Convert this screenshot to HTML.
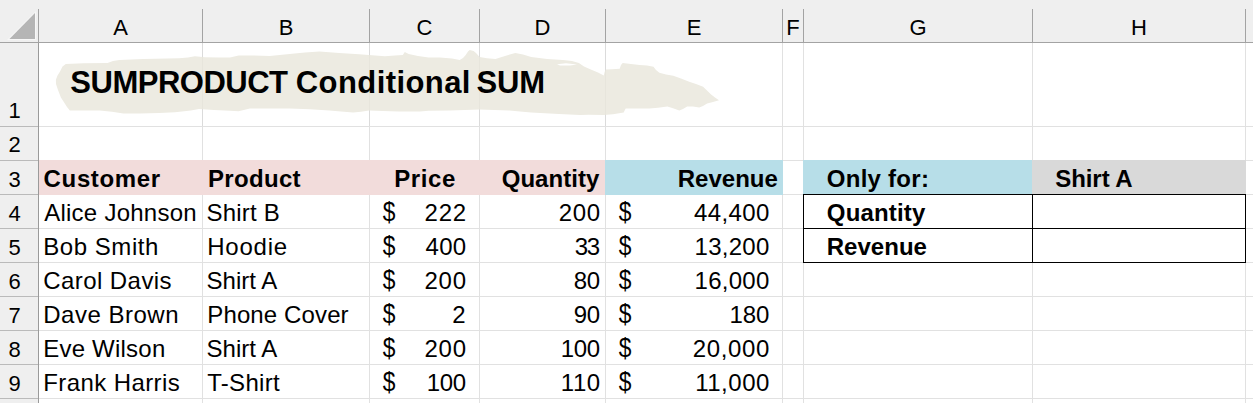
<!DOCTYPE html>
<html><head><meta charset="utf-8"><title>sheet</title>
<style>
html,body{margin:0;padding:0;}
body{width:1253px;height:403px;overflow:hidden;background:#fff;position:relative;font-family:"Liberation Sans",sans-serif;color:#000;}
.a{position:absolute;}
.t{position:absolute;white-space:nowrap;line-height:1;}
.vl{position:absolute;width:1px;background:#e1e1e1;top:43px;height:360px;}
.hl{position:absolute;height:1px;background:#e1e1e1;left:39px;width:1214px;}
.hv{position:absolute;width:1px;background:#a3a3a3;top:9px;height:33px;}
.rl{position:absolute;height:1px;background:#bababa;left:0;width:38px;}
</style></head><body>

<div class="a" style="left:0;top:0;width:1253px;height:42px;background:#efefef;"></div>
<div class="a" style="left:0;top:0;width:38px;height:403px;background:#efefef;"></div>
<div class="hl" style="top:126px;"></div>
<div class="hl" style="top:160px;"></div>
<div class="hl" style="top:194px;"></div>
<div class="hl" style="top:228px;"></div>
<div class="hl" style="top:262px;"></div>
<div class="hl" style="top:296px;"></div>
<div class="hl" style="top:330px;"></div>
<div class="hl" style="top:364px;"></div>
<div class="hl" style="top:398px;"></div>
<div class="vl" style="left:202px;"></div>
<div class="vl" style="left:369px;"></div>
<div class="vl" style="left:479px;"></div>
<div class="vl" style="left:605px;"></div>
<div class="vl" style="left:782px;"></div>
<div class="vl" style="left:803px;"></div>
<div class="vl" style="left:1032px;"></div>
<div class="vl" style="left:1245px;"></div>
<div class="a" style="left:39px;top:160px;width:566px;height:35px;background:#f2dcdb;"></div>
<div class="a" style="left:605px;top:160px;width:178px;height:35px;background:#b7dee8;"></div>
<div class="a" style="left:803px;top:160px;width:229px;height:35px;background:#b7dee8;"></div>
<div class="a" style="left:1032px;top:160px;width:214px;height:35px;background:#d9d9d9;"></div>
<div class="a" style="left:0;top:42px;width:1253px;height:1px;background:#a3a3a3;"></div>
<div class="a" style="left:38px;top:43px;width:1px;height:360px;background:#9a9a9a;"></div>
<div class="hv" style="left:38px;"></div>
<div class="hv" style="left:202px;"></div>
<div class="hv" style="left:369px;"></div>
<div class="hv" style="left:479px;"></div>
<div class="hv" style="left:605px;"></div>
<div class="hv" style="left:782px;"></div>
<div class="hv" style="left:803px;"></div>
<div class="hv" style="left:1032px;"></div>
<div class="hv" style="left:1245px;"></div>
<div class="rl" style="top:126px;"></div>
<div class="rl" style="top:160px;"></div>
<div class="rl" style="top:194px;"></div>
<div class="rl" style="top:228px;"></div>
<div class="rl" style="top:262px;"></div>
<div class="rl" style="top:296px;"></div>
<div class="rl" style="top:330px;"></div>
<div class="rl" style="top:364px;"></div>
<div class="rl" style="top:398px;"></div>
<svg class="a" style="left:0;top:0" width="39" height="43"><polygon points="36,11 36,40 7,40" fill="#f7f7f7"/><polygon points="35,13 35,39 9.4,39" fill="#b5b5b5"/></svg>
<svg class="a" style="left:0;top:0" width="1253" height="403"><path fill="#edebe2" d="M59.9,71.8 L62.5,66.5 L65.8,63.9 L83.7,63.3 L107.5,62.9 L113.0,61.0 L119.4,59.9 L143.3,58.9 L179.0,58.3 L188.0,57.6 L194.9,56.3 L205.0,57.2 L218.7,57.5 L230.0,57.6 L238.6,55.5 L249.9,55.5 L269.7,55.9 L289.6,53.9 L305.0,52.5 L319.4,51.5 L339.2,52.9 L359.1,54.3 L384.9,56.3 L395.0,55.6 L402.8,54.9 L404.8,51.9 L408.7,53.9 L418.0,56.0 L428.6,57.5 L439.9,57.5 L452.0,58.5 L459.7,59.9 L463.0,58.0 L465.7,54.9 L468.0,51.5 L469.7,50.0 L473.6,51.0 L476.0,53.0 L479.6,56.9 L487.0,58.2 L495.5,58.9 L505.0,56.0 L515.3,52.9 L523.0,54.5 L531.2,56.9 L547.1,58.9 L563.0,59.9 L572.0,61.0 L578.9,62.9 L584.0,66.5 L590.8,69.5 L598.0,72.5 L603.8,75.4 L604.6,72.0 L605.8,69.4 L612.0,69.3 L619.7,68.8 L621.0,65.0 L622.7,62.9 L631.0,64.0 L639.6,64.9 L647.0,65.6 L653.5,66.8 L656.0,70.0 L659.4,72.8 L666.0,74.5 L673.3,75.8 L681.0,78.5 L689.2,81.7 L696.0,84.0 L703.1,86.7 L707.0,90.5 L711.1,94.6 L715.0,97.5 L719.0,100.2 L713.0,102.0 L707.1,103.6 L703.0,106.0 L699.2,107.6 L693.0,106.6 L687.2,106.6 L683.0,109.0 L679.3,110.5 L673.0,108.2 L667.4,106.6 L658.0,107.8 L649.5,108.5 L637.0,108.6 L625.7,108.5 L624.5,110.8 L623.7,112.5 L613.0,114.2 L603.8,115.1 L588.8,114.8 L580.0,115.0 L559.0,113.9 L545.0,113.2 L531.2,112.5 L520.0,111.4 L509.4,110.5 L479.6,109.5 L449.8,110.5 L428.6,110.7 L420.0,111.5 L398.8,111.5 L383.0,111.0 L369.0,110.5 L361.0,111.8 L353.1,112.5 L341.0,111.4 L329.3,110.5 L310.0,109.3 L289.6,108.5 L249.9,108.5 L238.6,111.2 L230.0,110.7 L214.0,110.0 L198.9,109.1 L190.9,110.5 L175.0,112.2 L159.2,113.1 L140.0,113.6 L123.4,113.5 L112.0,111.8 L99.6,110.5 L85.0,110.6 L69.8,110.5 L67.0,107.0 L64.8,103.6 L60.9,97.6 L57.9,89.7 L56.0,84.0 L55.9,79.7 L57.5,75.5 Z"/><path fill="#fff" d="M557,64.2 L566,63.3 L577,64.6 L570,65.6 L560,65.4 Z"/></svg>
<div class="a" style="left:202px;top:43px;width:1px;height:83px;background:rgba(0,0,0,0.022);"></div>
<div class="a" style="left:369px;top:43px;width:1px;height:83px;background:rgba(0,0,0,0.022);"></div>
<div class="a" style="left:479px;top:43px;width:1px;height:83px;background:rgba(0,0,0,0.022);"></div>
<div class="a" style="left:605px;top:43px;width:1px;height:83px;background:rgba(0,0,0,0.022);"></div>
<div class="a" style="left:803px;top:194px;width:443px;height:1px;background:#000;"></div>
<div class="a" style="left:803px;top:228px;width:443px;height:1px;background:#000;"></div>
<div class="a" style="left:803px;top:262px;width:443px;height:1px;background:#000;"></div>
<div class="a" style="left:803px;top:194px;width:1px;height:69px;background:#000;"></div>
<div class="a" style="left:1032px;top:194px;width:1px;height:69px;background:#000;"></div>
<div class="a" style="left:1245px;top:194px;width:1px;height:69px;background:#000;"></div>
<span class="t" style="left:90.5px;width:60px;text-align:center;top:16.68px;font-size:22px;">A</span>
<span class="t" style="left:256px;width:60px;text-align:center;top:16.68px;font-size:22px;">B</span>
<span class="t" style="left:394.5px;width:60px;text-align:center;top:16.68px;font-size:22px;">C</span>
<span class="t" style="left:512.5px;width:60px;text-align:center;top:16.68px;font-size:22px;">D</span>
<span class="t" style="left:664px;width:60px;text-align:center;top:16.68px;font-size:22px;">E</span>
<span class="t" style="left:763px;width:60px;text-align:center;top:16.68px;font-size:22px;">F</span>
<span class="t" style="left:888px;width:60px;text-align:center;top:16.68px;font-size:22px;">G</span>
<span class="t" style="left:1109px;width:60px;text-align:center;top:16.68px;font-size:22px;">H</span>
<span class="t" style="left:-0.4px;width:30px;text-align:center;top:99.68px;font-size:22px;">1</span>
<span class="t" style="left:-0.4px;width:30px;text-align:center;top:133.68px;font-size:22px;">2</span>
<span class="t" style="left:-0.4px;width:30px;text-align:center;top:168.68px;font-size:22px;">3</span>
<span class="t" style="left:-0.4px;width:30px;text-align:center;top:202.68px;font-size:22px;">4</span>
<span class="t" style="left:-0.4px;width:30px;text-align:center;top:236.68px;font-size:22px;">5</span>
<span class="t" style="left:-0.4px;width:30px;text-align:center;top:270.68px;font-size:22px;">6</span>
<span class="t" style="left:-0.4px;width:30px;text-align:center;top:304.68px;font-size:22px;">7</span>
<span class="t" style="left:-0.4px;width:30px;text-align:center;top:338.68px;font-size:22px;">8</span>
<span class="t" style="left:-0.4px;width:30px;text-align:center;top:372.68px;font-size:22px;">9</span>
<span class="t" style="left:70.30px;top:67.06px;font-size:31px;font-weight:bold;letter-spacing:-0.492px;">SUMPRODUCT</span>
<span class="t" style="left:295.80px;top:67.06px;font-size:31px;font-weight:bold;letter-spacing:0.414px;">Conditional</span>
<span class="t" style="left:476.60px;top:67.06px;font-size:31px;font-weight:bold;letter-spacing:-0.232px;">SUM</span>
<span class="t" style="left:43.60px;top:166.98px;font-size:24px;font-weight:bold;letter-spacing:0.646px;">Customer</span>
<span class="t" style="left:208.00px;top:166.98px;font-size:24px;font-weight:bold;letter-spacing:0.321px;">Product</span>
<span class="t" style="left:394.30px;top:166.98px;font-size:24px;font-weight:bold;letter-spacing:0.559px;">Price</span>
<span class="t" style="left:501.70px;top:166.98px;font-size:24px;font-weight:bold;letter-spacing:0.045px;">Quantity</span>
<span class="t" style="left:677.70px;top:166.98px;font-size:24px;font-weight:bold;letter-spacing:0.017px;">Revenue</span>
<span class="t" style="left:826.80px;top:166.98px;font-size:24px;font-weight:bold;letter-spacing:0.262px;">Only for:</span>
<span class="t" style="left:1055.20px;top:166.98px;font-size:24px;font-weight:bold;letter-spacing:-0.056px;">Shirt A</span>
<span class="t" style="left:826.80px;top:200.98px;font-size:24px;font-weight:bold;letter-spacing:0.173px;">Quantity</span>
<span class="t" style="left:826.70px;top:234.98px;font-size:24px;font-weight:bold;letter-spacing:0.034px;">Revenue</span>
<span class="t" style="left:44.20px;top:200.98px;font-size:24px;letter-spacing:0.252px;">Alice Johnson</span>
<span class="t" style="left:206.50px;top:200.98px;font-size:24px;letter-spacing:0.197px;">Shirt B</span>
<span class="t" style="left:382.90px;top:200.98px;font-size:24px;transform-origin:50% 12.2px;transform:translate(-0.5px,-0.8px) scale(0.95,1.14);">$</span>
<span class="t" style="left:424.60px;top:200.98px;font-size:24px;letter-spacing:0.702px;">222</span>
<span class="t" style="left:558.70px;top:200.98px;font-size:24px;letter-spacing:0.702px;">200</span>
<span class="t" style="left:618.90px;top:200.98px;font-size:24px;transform-origin:50% 12.2px;transform:translate(-0.5px,-0.8px) scale(0.95,1.14);">$</span>
<span class="t" style="left:694.00px;top:200.98px;font-size:24px;letter-spacing:0.388px;">44,400</span>
<span class="t" style="left:43.20px;top:234.98px;font-size:24px;letter-spacing:0.554px;">Bob Smith</span>
<span class="t" style="left:207.30px;top:234.98px;font-size:24px;letter-spacing:0.739px;">Hoodie</span>
<span class="t" style="left:382.90px;top:234.98px;font-size:24px;transform-origin:50% 12.2px;transform:translate(-0.5px,-0.8px) scale(0.95,1.14);">$</span>
<span class="t" style="left:425.60px;top:234.98px;font-size:24px;letter-spacing:0.202px;">400</span>
<span class="t" style="left:574.80px;top:234.98px;font-size:24px;letter-spacing:-1.348px;">33</span>
<span class="t" style="left:618.90px;top:234.98px;font-size:24px;transform-origin:50% 12.2px;transform:translate(-0.5px,-0.8px) scale(0.95,1.14);">$</span>
<span class="t" style="left:694.50px;top:234.98px;font-size:24px;letter-spacing:0.288px;">13,200</span>
<span class="t" style="left:43.20px;top:268.98px;font-size:24px;letter-spacing:0.437px;">Carol Davis</span>
<span class="t" style="left:206.60px;top:268.98px;font-size:24px;">Shirt A</span>
<span class="t" style="left:382.90px;top:268.98px;font-size:24px;transform-origin:50% 12.2px;transform:translate(-0.5px,-0.8px) scale(0.95,1.14);">$</span>
<span class="t" style="left:424.40px;top:268.98px;font-size:24px;letter-spacing:0.802px;">200</span>
<span class="t" style="left:573.80px;top:268.98px;font-size:24px;letter-spacing:-0.348px;">80</span>
<span class="t" style="left:618.90px;top:268.98px;font-size:24px;transform-origin:50% 12.2px;transform:translate(-0.5px,-0.8px) scale(0.95,1.14);">$</span>
<span class="t" style="left:694.50px;top:268.98px;font-size:24px;letter-spacing:0.288px;">16,000</span>
<span class="t" style="left:43.20px;top:302.98px;font-size:24px;letter-spacing:0.514px;">Dave Brown</span>
<span class="t" style="left:207.30px;top:302.98px;font-size:24px;letter-spacing:0.121px;">Phone Cover</span>
<span class="t" style="left:382.90px;top:302.98px;font-size:24px;transform-origin:50% 12.2px;transform:translate(-0.5px,-0.8px) scale(0.95,1.14);">$</span>
<span class="t" style="left:452.30px;top:302.98px;font-size:24px;">2</span>
<span class="t" style="left:573.80px;top:302.98px;font-size:24px;letter-spacing:-0.348px;">90</span>
<span class="t" style="left:618.90px;top:302.98px;font-size:24px;transform-origin:50% 12.2px;transform:translate(-0.5px,-0.8px) scale(0.95,1.14);">$</span>
<span class="t" style="left:729.50px;top:302.98px;font-size:24px;letter-spacing:-0.098px;">180</span>
<span class="t" style="left:43.20px;top:336.98px;font-size:24px;letter-spacing:0.224px;">Eve Wilson</span>
<span class="t" style="left:206.60px;top:336.98px;font-size:24px;">Shirt A</span>
<span class="t" style="left:382.90px;top:336.98px;font-size:24px;transform-origin:50% 12.2px;transform:translate(-0.5px,-0.8px) scale(0.95,1.14);">$</span>
<span class="t" style="left:424.40px;top:336.98px;font-size:24px;letter-spacing:0.802px;">200</span>
<span class="t" style="left:560.80px;top:336.98px;font-size:24px;letter-spacing:-0.348px;">100</span>
<span class="t" style="left:618.90px;top:336.98px;font-size:24px;transform-origin:50% 12.2px;transform:translate(-0.5px,-0.8px) scale(0.95,1.14);">$</span>
<span class="t" style="left:692.80px;top:336.98px;font-size:24px;letter-spacing:0.628px;">20,000</span>
<span class="t" style="left:43.20px;top:370.98px;font-size:24px;letter-spacing:0.408px;">Frank Harris</span>
<span class="t" style="left:207.20px;top:370.98px;font-size:24px;letter-spacing:0.299px;">T-Shirt</span>
<span class="t" style="left:382.90px;top:370.98px;font-size:24px;transform-origin:50% 12.2px;transform:translate(-0.5px,-0.8px) scale(0.95,1.14);">$</span>
<span class="t" style="left:426.80px;top:370.98px;font-size:24px;letter-spacing:-0.398px;">100</span>
<span class="t" style="left:560.80px;top:370.98px;font-size:24px;letter-spacing:0.543px;">110</span>
<span class="t" style="left:618.90px;top:370.98px;font-size:24px;transform-origin:50% 12.2px;transform:translate(-0.5px,-0.8px) scale(0.95,1.14);">$</span>
<span class="t" style="left:695.20px;top:370.98px;font-size:24px;letter-spacing:0.505px;">11,000</span>
</body></html>
